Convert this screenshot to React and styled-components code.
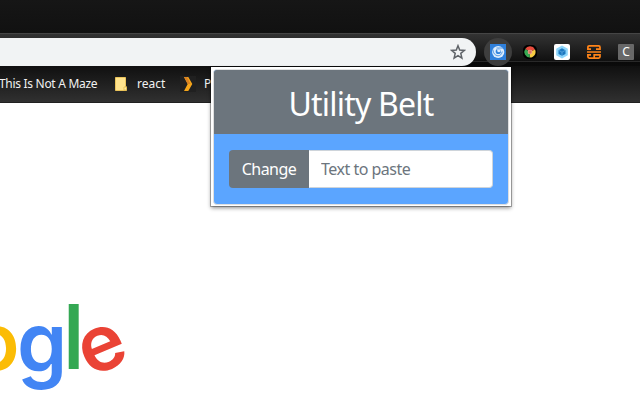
import React from "react";
import styled, { createGlobalStyle } from "styled-components";

const GlobalStyle = createGlobalStyle`
  * { box-sizing: border-box; }
  body { margin: 0; background: #fff; overflow: hidden; font-family: "Noto Sans", "Open Sans", sans-serif; }
`;
const Browser = styled.div`
  position: relative;
  width: 640px;
  height: 400px;
  overflow: hidden;
  display: flex;
  flex-direction: column;
  background: #fff;
`;
const TitleBar = styled.div`
  flex: none;
  height: 33px;
  background: linear-gradient(#161616, #111);
`;
const Toolbar = styled.div`
  flex: none;
  height: 33px;
  display: flex;
  align-items: flex-start;
  padding-top: 4px;
  border-top: 1px solid #454545;
  background: linear-gradient(#333 0, #101010 27px, #292929 27px, #292929 28px, #090909 28px, #0b0b0b 32px);
`;
const AddressBar = styled.div`
  width: 476px;
  height: 28px;
  display: flex;
  align-items: center;
  justify-content: flex-end;
  padding-right: 10px;
  border-radius: 0 14px 14px 0;
  background: #f1f3f4;
`;
const Extensions = styled.div`
  height: 28px;
  display: flex;
  align-items: center;
  margin-left: 8px;
  gap: 4px;
`;
const ExtensionButton = styled.div`
  flex: none;
  width: 28px;
  height: 28px;
  display: grid;
  place-items: center;
  border-radius: 50%;
  background: ${(p) => (p.$active ? "#3e3e3e" : "transparent")};
`;
const Icon = styled.svg`
  display: block;
  width: 16px;
  height: 16px;
`;
const LetterTile = styled.div`
  width: 16px;
  height: 16px;
  border-radius: 1px;
  background: #686868;
  color: #fff;
  font: 12px/16px "Noto Sans", sans-serif;
  text-align: center;
`;
const Bookmarks = styled.div`
  flex: none;
  height: 37px;
  display: flex;
  align-items: center;
  border-bottom: 1px solid #202020;
  background: linear-gradient(#101010, #303030);
`;
const Bookmark = styled.div`
  display: flex;
  align-items: center;
  gap: ${(p) => p.$gap || 0}px;
  width: ${(p) => p.$width}px;
  flex: none;
  color: #f1f1f1;
  font-size: 12px;
  line-height: 16px;
  white-space: nowrap;
`;
const BookmarkLabel = styled.span`
  margin-left: ${(p) => p.$shift || 0}px;
  letter-spacing: ${(p) => p.$spacing || 0}px;
`;
const Page = styled.main`
  flex: 1;
  padding-top: 190px;
`;
const Logo = styled.svg`
  display: block;
  width: 140px;
  height: 107px;
  font-family: Inter, sans-serif;
  font-size: 78px;
`;
const Popup = styled.section`
  position: absolute;
  left: 211px;
  top: 67px;
  width: 300px;
  height: 139px;
  padding: 2px;
  background: #fff;
  box-shadow: 0 0 0 1px rgba(0, 0, 0, 0.28), 0 2px 4px rgba(0, 0, 0, 0.45);
`;
const Card = styled.div`
  display: flex;
  flex-direction: column;
  height: 136px;
  overflow: hidden;
  border: 1px solid #dfdfdf;
  border-radius: 4px;
  background: #5ba5ff;
`;
const CardHeader = styled.h1`
  flex: none;
  height: 64px;
  margin: 0;
  padding-top: 12px;
  background: #6c757d;
  color: #fff;
  font-size: 32px;
  font-weight: 400;
  line-height: 43px;
  letter-spacing: -0.8px;
  text-align: center;
`;
const InputGroup = styled.div`
  display: flex;
  height: 38px;
  margin: 16px 15px 0;
`;
const ChangeButton = styled.button`
  width: 80px;
  padding: 0;
  border: 0;
  border-radius: 4px 0 0 4px;
  background: #6c757d;
  color: #fff;
  font: 16px/24px "Noto Sans", sans-serif;
  letter-spacing: -0.5px;
`;
const PasteInput = styled.input`
  flex: 1;
  min-width: 0;
  padding: 0 11px;
  border: 1px solid #ced4da;
  border-left-color: #fff;
  border-radius: 0 4px 4px 0;
  background: #fff;
  font: 16px/24px "Noto Sans", sans-serif;
  letter-spacing: -0.5px;
  &::placeholder { color: #6c757d; opacity: 1; }
`;

const Star = () => (
  <Icon viewBox="0 0 16 16" fill="none" stroke="#5f6368" strokeWidth="1.5">
    <path d="M8 1.7 9.7 6l4.7.4-3.6 3 1.1 4.7L8 11.6l-3.9 2.5 1.1-4.7-3.6-3L6.3 6Z" />
  </Icon>
);
const UtilityIcon = () => (
  <Icon viewBox="0 0 16 16">
    <rect width="16" height="16" fill="#2f80dc" />
    <circle cx="8.2" cy="8" r="6.1" fill="#deedfc" />
    <path d="M2.9 5.5Q3.5 11.5 8 11.8q3.4 0 4.3-4.3M6.5 4H14" fill="none" stroke="#3587df" strokeWidth=".8" />
    <circle cx="8.3" cy="7.4" r="2.6" fill="#3284dd" />
    <path d="M7 5.2h3.5v2.2q-1.4 1.4-3 .3Z" fill="#d9eaff" />
  </Icon>
);
const ChromeIcon = () => (
  <Icon viewBox="0 0 16 16">
    <rect x="1" y="1" width="14" height="14" rx="5" fill="#000" />
    <path d="M8 8 3.2 5A5.6 5.6 0 0 1 13 5.5Z" fill="#e74b3c" />
    <path d="M8 8 13 5.5A5.6 5.6 0 0 1 7.7 13.6Z" fill="#f7cb42" />
    <path d="M8 8 7.7 13.6A5.6 5.6 0 0 1 3.2 5Z" fill="#38a852" />
    <circle cx="8" cy="8" r="2.3" fill="#eeb0a0" />
    <circle cx="8" cy="8" r="1.7" fill="#dc7460" />
  </Icon>
);
const CubeIcon = () => (
  <Icon viewBox="0 0 16 16">
    <rect width="16" height="16" rx="2" fill="#fff" />
    <path d="m8 1.5 5.8 3.2v6.6L8 14.5l-5.8-3.2V4.7Z" fill="#8ed6fb" />
    <path d="m8 4.3 3.5 1.9v3.7L8 11.8 4.5 9.9V6.2Z" fill="#1c78c0" />
    <path d="m4.5 6.2 3.5 2 3.5-2M8 8.2v3.6" fill="none" stroke="#70b5e6" strokeWidth=".6" />
  </Icon>
);
const OrangeIcon = () => (
  <Icon viewBox="0 0 16 16" fill="none" stroke="#ff8418" strokeWidth="1.7">
    <path d="M5 5.2H1.9V3.2Q1.9 1.9 3.2 1.9h9.5Q14 1.9 14 3.2v2H10M1 8h14M5 10.8H1.9v2q0 1.3 1.3 1.3h9.5q1.3 0 1.3-1.3v-2H8.2v3.3" />
  </Icon>
);
const NoteIcon = () => (
  <Icon viewBox="0 0 16 16">
    <path d="M.5 1.5h10v9.3h1v3.7H.5Z" fill="#ffe38d" stroke="#eac35a" />
    <path d="M9 14V11h2.4v3Z" fill="#fff0ab" stroke="#dfb341" strokeWidth=".7" />
  </Icon>
);
const ChevronIcon = () => (
  <Icon viewBox="0 0 16 16">
    <rect width="16" height="16" fill="#202020" />
    <path d="M4 1h4.3l4 7-4 7H4l3.7-7Z" fill="#f5a51a" />
    <path d="M4 1h3l3.5 7H7.7Z" fill="#d98123" />
  </Icon>
);

export default function App() {
  return (
    <>
      <GlobalStyle />
      <Browser>
        <TitleBar />
        <Toolbar>
          <AddressBar><Star /></AddressBar>
          <Extensions>
            <ExtensionButton $active><UtilityIcon /></ExtensionButton>
            <ExtensionButton><ChromeIcon /></ExtensionButton>
            <ExtensionButton><CubeIcon /></ExtensionButton>
            <ExtensionButton><OrangeIcon /></ExtensionButton>
            <ExtensionButton><LetterTile>C</LetterTile></ExtensionButton>
          </Extensions>
        </Toolbar>
        <Bookmarks>
          <Bookmark $width={115}><BookmarkLabel $shift={-1} $spacing={-0.3}>This Is Not A Maze</BookmarkLabel></Bookmark>
          <Bookmark $width={65} $gap={6}><NoteIcon /><BookmarkLabel>react</BookmarkLabel></Bookmark>
          <Bookmark $width={80} $gap={8}><ChevronIcon /><BookmarkLabel>P</BookmarkLabel></Bookmark>
        </Bookmarks>
        <Page>
          <Logo viewBox="0 293 140 107" role="img" aria-label="Google">
            <text transform="translate(-28 369.5) scale(1 1.02)" fill="#fbbc05" fontWeight="600">o</text>
            <text transform="translate(17 371.5) scale(1.03 1.06)" fill="#4285f4" fontWeight="600">g</text>
            <text transform="translate(63.4 369) scale(1 1.147)" fill="#34a853" fontWeight="600">l</text>
            <text transform="rotate(-23 102.5 348) translate(79 370)" fill="#ea4335" fontWeight="600">e</text>
          </Logo>
        </Page>
        <Popup>
          <Card>
            <CardHeader>Utility Belt</CardHeader>
            <InputGroup>
              <ChangeButton>Change</ChangeButton>
              <PasteInput placeholder="Text to paste" />
            </InputGroup>
          </Card>
        </Popup>
      </Browser>
    </>
  );
}
